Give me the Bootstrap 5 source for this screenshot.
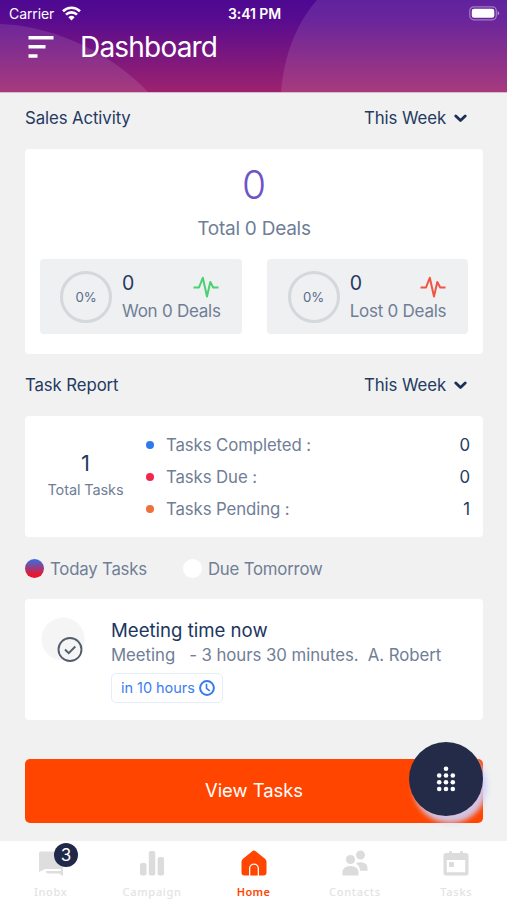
<!DOCTYPE html>
<html lang="en">
<head>
<meta charset="utf-8">
<meta name="viewport" content="width=device-width, initial-scale=1">
<title>Dashboard</title>
<link href="https://cdn.jsdelivr.net/npm/bootstrap@5.3.0/dist/css/bootstrap.min.css" rel="stylesheet">
<style>
  body { font-family: Inter, "Liberation Sans", sans-serif; background: #f1f1f1; color: #233a62; font-size: 16.8px; letter-spacing: -.1px; line-height: 20px; }
  svg { display: block; flex: none; }
  .app { width: 507px; height: 900px; }
  .hero { height: 93px; background: linear-gradient(#4d0891 0, #570b90 20%, #9d226e 100%); border-bottom: 1px solid #dcb9d3; }
  .hero-bg { inset: 0; }
  .status { height: 27px; font-size: 14px; padding: 0 7px 0 9px; }
  .status > * { flex: 1 1 0; }
  .title { font-size: 28px; letter-spacing: -.8px; line-height: 34px; padding-left: 28px; gap: 26px; margin-top: 3px; }
  .main { padding: 0 24px 0 25px; }
  .sec { height: 56px; padding: 0 16px 6px 0; }
  .sec-report { height: 62px; padding-bottom: 0; }
  .panel { background: #fff; border-radius: 4px; }
  .muted { color: #707e96; }
  .total { font-size: 39px; line-height: 44px; color: #6d55c7; font-weight: 300; padding-top: 14px; letter-spacing: 0; }
  .total-label { font-size: 19px; letter-spacing: -.25px; line-height: 24px; margin-top: 9px; padding-top: 1px; height: 24px; }
  .deals { gap: 25px; padding: 19px 15px 20px; }
  .deal { flex: 1 1 0; height: 75px; background: #eef0f1; border-radius: 4px; padding: 0 21px 0 20px; }
  .deal + .deal { padding-left: 21px; }
  .deal-text { margin: -1px 0 0 10px; }
  .deal-label { font-size: 17px; letter-spacing: -.25px; margin-top: 7px; }
  .deal svg { margin: 4px 2px -4px 0; }
  .deal + .deal svg { margin-right: 1px; }
  .ring { width: 52px; height: 52px; border: 3px solid #d4d8da; border-radius: 50%; font-size: 13.2px; color: #596b8c; }
  .num { font-size: 19.5px; line-height: 22px; }
  .report { height: 121px; }
  .report-total { width: 121px; margin-top: -4px; }
  .report-count { font-size: 22px; line-height: 30px; }
  .report-caption { font-size: 14.5px; line-height: 24px; letter-spacing: -.1px; }
  .report-list { line-height: 32px; padding-right: 13px; }
  .dot { width: 8px; height: 8px; border-radius: 50%; }
  .blue { background: #2f78ee; } .red { background: #f1264b; } .orange { background: #ef7038; }
  .radio { width: 19px; height: 19px; border-radius: 50%; background: #fff; }
  .radio.on { background: linear-gradient(#3e69dc 5%, #ec142c 85%); }
  .filters { height: 62px; gap: 36px; padding-top: 1px; }
  .filters > div { gap: 6px; letter-spacing: -.2px; }
  .task { height: 121px; padding: 18px 16px; }
  .task-title { font-size: 18.6px; line-height: 27px; color: #1b365e; letter-spacing: 0; }
  .task-sub { line-height: 23px; white-space: pre; letter-spacing: -.05px; }
  .chip { height: 30px; margin-top: 6px; border: 1px solid #e6edf6; border-radius: 5px; font-size: 14.5px; letter-spacing: -.04px; color: #3c7df0; padding: 0 7px 0 9px; gap: 4px; }
  .view { height: 64px; margin-top: 39px; background: #ff4500; border: 0; border-radius: 5px; color: #fff; font-size: 18.4px; padding-bottom: 6px; }
  .view:hover { background: #ff4500; color: #fff; }
  .fab { right: 24px; top: 742px; width: 74px; height: 74px; border-radius: 50%; background: #232b49; box-shadow: 4px 7px 5px 0 #cfd0f8e6; }
  .tabs { height: 59px; margin-top: 18px; background: #fff; font: 500 11px/14px "Noto Sans", sans-serif; letter-spacing: .7px; color: #e3e3e3; }
  .tabs > div { flex: 1 1 0; padding-top: 8px; }
  .tabs span { margin-top: 8px; }
  .tabs .now { color: #ff4500; letter-spacing: .3px; }
  .tabs .now span { font-weight: 600; }
  .count { left: 54px; top: 2px; width: 24px; height: 24px; border-radius: 50%; background: #20294a; color: #fff; font: 400 17px/24px Inter, sans-serif; letter-spacing: 0; }
</style>
</head>
<body>
<div class="app position-relative d-flex flex-column overflow-hidden">
  <header class="hero position-relative text-white">
    <svg class="hero-bg position-absolute" width="507" height="92">
      <path d="M0 24C45 25 105 47 148 92H0Z" fill="#fff" fill-opacity=".11"/>
      <path d="M317 0C296 24 284 55 281 92H507V0Z" fill="#fff" fill-opacity=".11"/>
    </svg>
    <div class="status position-relative d-flex align-items-center">
      <div class="d-flex align-items-center gap-1"><span class="pe-1">Carrier</span>
        <svg width="19" height="15" viewBox="0 0 19 15" fill="none" stroke="#fff" stroke-width="2.6"><path d="M1 5.200a12.200 12.200 0 0 1 17 0M4 8.600a7.900 7.900 0 0 1 11 0"/><path d="M6.400 11.200a4.500 4.500 0 0 1 6.200 0L9.500 14.400Z" fill="#fff" stroke="none"/></svg>
      </div>
      <div class="text-center fw-semibold">3:41 PM</div>
      <div class="d-flex justify-content-end"><svg width="31" height="15" viewBox="0 0 31 15"><rect x=".8" y=".8" width="26.500" height="13" rx="4" fill="none" stroke="#fff" stroke-opacity=".4" stroke-width="1.2"/><rect x="2.800" y="2.800" width="22.500" height="9" rx="2.300" fill="#fff"/><path d="M28.600 5v4.600q1.600-.8 1.600-2.300T28.600 5" fill="#fff" fill-opacity=".5"/></svg></div>
    </div>
    <div class="title position-relative d-flex align-items-center">
      <svg width="26" height="24" viewBox="0 0 26 24" fill="#fff"><path d="M.5 1h25v3.600H.5zM.5 10h17v3.600H.5zM.5 19.200h9v3.600h-9z"/></svg>
      <span>Dashboard</span>
    </div>
  </header>

  <main class="main">
    <div class="sec d-flex align-items-center justify-content-between">
      <span>Sales Activity</span>
      <span class="d-flex align-items-center gap-2">This Week <svg width="13" height="9" viewBox="0 0 13 9" fill="none" stroke="#1b2f58" stroke-width="2.8" stroke-linecap="round" stroke-linejoin="round"><path d="M1.800 2 6.500 6.500 11.200 2"/></svg></span>
    </div>
    <section class="panel text-center">
      <div class="total">0</div>
      <div class="total-label muted">Total 0 Deals</div>
      <div class="deals d-flex text-start">
        <div class="deal d-flex align-items-center">
          <div class="ring d-flex align-items-center justify-content-center flex-shrink-0">0%</div>
          <div class="deal-text flex-fill">
            <div class="d-flex justify-content-between align-items-center"><span class="num">0</span>
              <svg width="26" height="22" viewBox="0 0 26 22" fill="none" stroke="#4bcf73" stroke-width="2" stroke-linejoin="round"><path d="M.5 11.500H6L9.800 1.800 14 20.500 17.300 6l2.900 5.500H25.500"/></svg></div>
            <div class="deal-label muted text-nowrap">Won 0 Deals</div>
          </div>
        </div>
        <div class="deal d-flex align-items-center">
          <div class="ring d-flex align-items-center justify-content-center flex-shrink-0">0%</div>
          <div class="deal-text flex-fill">
            <div class="d-flex justify-content-between align-items-center"><span class="num">0</span>
              <svg width="26" height="22" viewBox="0 0 26 22" fill="none" stroke="#f05543" stroke-width="2" stroke-linejoin="round"><path d="M.5 11.500H6L9.800 1.800 14 20.500 17.300 6l2.900 5.500H25.500"/></svg></div>
            <div class="deal-label muted text-nowrap">Lost 0 Deals</div>
          </div>
        </div>
      </div>
    </section>

    <div class="sec sec-report d-flex align-items-center justify-content-between">
      <span>Task Report</span>
      <span class="d-flex align-items-center gap-2">This Week <svg width="13" height="9" viewBox="0 0 13 9" fill="none" stroke="#1b2f58" stroke-width="2.8" stroke-linecap="round" stroke-linejoin="round"><path d="M1.800 2 6.500 6.500 11.200 2"/></svg></span>
    </div>
    <section class="panel report d-flex align-items-center">
      <div class="report-total text-center"><div class="report-count">1</div><div class="report-caption muted">Total Tasks</div></div>
      <div class="report-list flex-fill">
        <div class="d-flex align-items-center"><i class="dot blue me-2"></i><span class="muted ps-1">Tasks Completed :</span><span class="ms-auto">0</span></div>
        <div class="d-flex align-items-center"><i class="dot red me-2"></i><span class="muted ps-1">Tasks Due :</span><span class="ms-auto">0</span></div>
        <div class="d-flex align-items-center"><i class="dot orange me-2"></i><span class="muted ps-1">Tasks Pending :</span><span class="ms-auto">1</span></div>
      </div>
    </section>

    <div class="filters muted d-flex align-items-center">
      <div class="d-flex align-items-center"><i class="radio on"></i>Today Tasks</div>
      <div class="d-flex align-items-center"><i class="radio"></i>Due Tomorrow</div>
    </div>
    <section class="panel task d-flex">
      <svg class="me-4" width="46" height="46" viewBox="0 0 46 46" fill="none"><circle cx="22" cy="22" r="21.500" fill="#f5f5f5"/><g stroke="#535e6d" stroke-width="1.900"><circle cx="29" cy="32.500" r="11.500"/><path d="m24 32.500 3.700 3.700 6.600-6.700"/></g></svg>
      <div>
        <div class="task-title">Meeting time now</div>
        <div class="task-sub muted">Meeting   - 3 hours 30 minutes.  A. Robert</div>
        <div class="chip d-inline-flex align-items-center">in 10 hours
          <svg width="16" height="16" viewBox="0 0 16 16" fill="none" stroke="#3979ef" stroke-width="2"><circle cx="8" cy="8" r="6.900"/><path d="M7.500 3.800V8.300l3.300 2.600" stroke-width="1.600"/></svg></div>
      </div>
    </section>
    <button class="view btn w-100 d-block">View Tasks</button>
  </main>

  <div class="fab position-absolute d-flex align-items-center justify-content-center">
    <svg width="20" height="26" viewBox="0 0 20 26" fill="#fff"><circle cx="10" cy="2.700" r="2.300"/><circle cx="3.200" cy="9.500" r="2.300"/><circle cx="10" cy="9.500" r="2.300"/><circle cx="16.800" cy="9.500" r="2.300"/><circle cx="3.200" cy="16.200" r="2.300"/><circle cx="10" cy="16.200" r="2.300"/><circle cx="16.800" cy="16.200" r="2.300"/><circle cx="3.200" cy="23" r="2.300"/><circle cx="10" cy="23" r="2.300"/><circle cx="16.800" cy="23" r="2.300"/></svg>
  </div>

  <nav class="tabs d-flex">
    <div class="position-relative d-flex flex-column align-items-center">
      <svg width="26" height="28" viewBox="0 0 26 28" fill="#dedede"><path d="M3 2.500h18q2 0 2 2V20H7L1 23V4.500q0-2 2-2Z"/><path d="M8 22h15v-4h2v9l-4-2.500H10q-2 0-2-2.500Z"/></svg>
      <b class="count position-absolute text-center">3</b><span>Inobx</span>
    </div>
    <div class="d-flex flex-column align-items-center">
      <svg width="26" height="28" viewBox="0 0 26 28" fill="#dcdcdc"><rect x="1" y="14" width="6.500" height="12.500" rx="2"/><rect x="9.800" y="2" width="6.500" height="24.500" rx="2"/><rect x="18.600" y="8" width="6.500" height="18.500" rx="2"/></svg>
      <span>Campaign</span>
    </div>
    <div class="now d-flex flex-column align-items-center">
      <svg width="26" height="28" viewBox="0 0 26 28" fill="#ff4500"><path d="M11.300 2.200q1.700-1.300 3.400 0l9.300 7.600q1.500 1.300 1.500 3v10.700q0 3-3 3H18V19.500a5 5 0 0 0-10 0v7H3.500q-3 0-3-3V12.800q0-1.700 1.500-3Z"/><path d="M9.300 26.500v-7a3.700 3.700 0 0 1 7.400 0v7h-2v-7a1.700 1.700 0 0 0-3.400 0v7Z"/><path d="M11 19.500a2 2 0 0 1 4 0v7h-4Z"/></svg>
      <span>Home</span>
    </div>
    <div class="d-flex flex-column align-items-center">
      <svg width="26" height="28" viewBox="0 0 26 28" fill="#dcdcdc"><circle cx="18.500" cy="6" r="4.500"/><circle cx="8.500" cy="10.500" r="4.600"/><path d="M.5 26.500v-3q0-6.500 8-6.500t8 6.500v3ZM14 14.500q2-1.500 5-1.300 6.500.4 6.500 6v2.500h-7.300Q17.500 16.500 14 14.500Z"/></svg>
      <span>Contacts</span>
    </div>
    <div class="d-flex flex-column align-items-center">
      <svg width="26" height="28" viewBox="0 0 26 28" fill="#dcdcdc"><path fill-rule="evenodd" d="M3 4h3V2.200h3V4h8V2.200h3V4h3q2.500 0 2.500 2.500V24q0 2.500-2.500 2.500H3Q.5 26.500.5 24V6.500Q.5 4 3 4Zm.8 7v12.300h18.400V11Z"/><rect x="6" y="13" width="5" height="5" rx=".8"/></svg>
      <span>Tasks</span>
    </div>
  </nav>
</div>
<script src="https://cdn.jsdelivr.net/npm/bootstrap@5.3.0/dist/js/bootstrap.bundle.min.js"></script>
</body>
</html>
